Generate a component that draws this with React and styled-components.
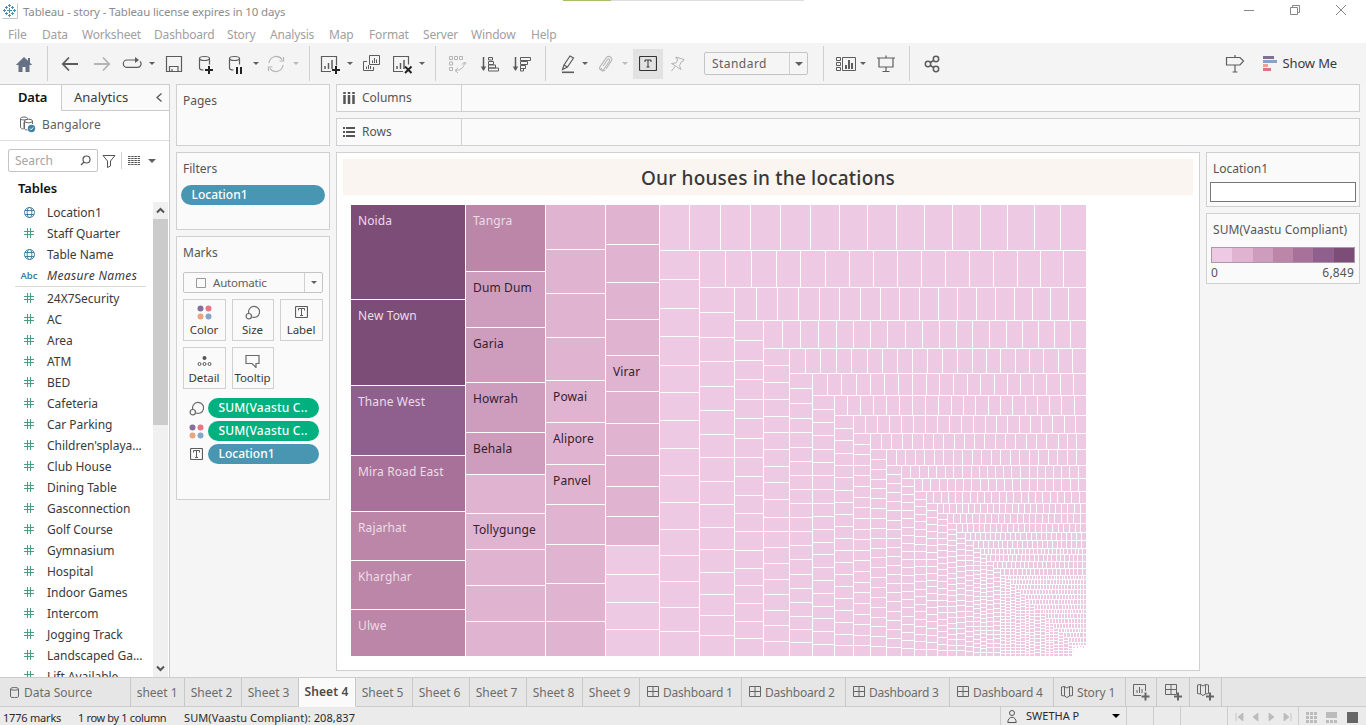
import React from 'react';
import styled, { createGlobalStyle, css } from 'styled-components';

const GlobalStyle = createGlobalStyle`
  * { box-sizing: border-box; }
  html, body { margin: 0; padding: 0; overflow: hidden; }
  body { font-family: "Noto Sans", "Open Sans", sans-serif; font-size: 12px; color: #333; }
`;

const font = css`
  font-size: ${(p) => p.$size || 12}px;
  letter-spacing: ${(p) => p.$ls || 0}px;
  white-space: nowrap;
`;

/* ---------- frame ---------- */
const Window = styled.div`
  width: 1366px; height: 725px; display: flex; flex-direction: column;
  background: #f5f5f5; overflow: hidden;
`;
const TitleBar = styled.header`
  height: 24px; background: #fff; display: flex; align-items: center; padding: 0 0 2px 2px;
  color: #8c8c8c; position: relative; flex: none;
`;
const TitleText = styled.span`font-size: 11.5px; letter-spacing: -0.14px; margin-left: 5px; white-space: nowrap;`;
const ProgressLine = styled.div`
  position: absolute; top: 0; left: 563px; width: 241px; height: 1px;
  background: linear-gradient(to right, #a3bf68 48px, #dedede 48px);
`;
const WindowButtons = styled.div`margin-left: auto; display: flex; gap: 30px; padding-right: 17px; height: 16px; margin-top: -2px;`;
const MenuBar = styled.nav`height: 19px; background: #fff; display: flex; color: #a0a0a0; flex: none;`;
const MenuItem = styled.span`
  width: ${(p) => p.$w}px; font-size: 12px; letter-spacing: -0.18px; line-height: 21px; white-space: nowrap;
  &:first-child { margin-left: 8px; }
`;
const Toolbar = styled.div`height: 41px; background: #f4f4f4; display: flex; align-items: center; flex: none;`;
const Slot = styled.span`
  margin-left: ${(p) => (p.$push ? 'auto' : `${p.$ml}px`)}; width: ${(p) => p.$w || 20}px; height: 20px; display: flex;
  align-items: center; justify-content: center; flex: none; color: ${(p) => (p.$off ? '#b4b4b4' : '#5c5c5c')};
`;
const Separator = styled.i`width: 1px; height: ${(p) => p.$h || 35}px; margin-left: ${(p) => p.$ml}px; background: #d0d0d0; flex: none;`;
const Caret = styled.i`
  margin-left: ${(p) => p.$ml || 0}px; width: 0; height: 0; flex: none;
  border-left: ${(p) => p.$s || 3}px solid transparent; border-right: ${(p) => p.$s || 3}px solid transparent;
  border-top: ${(p) => p.$s || 3}px solid ${(p) => (p.$off ? '#bbb' : p.$c || '#606060')};
`;
const ActiveTool = styled.span`
  margin-left: 5px; width: 30px; height: 30px; background: #e2e2e2; color: #333; flex: none;
  display: flex; align-items: center; justify-content: center;
`;
const Select = styled.div`
  display: flex; width: ${(p) => p.$w}px; height: ${(p) => p.$h}px; margin: ${(p) => p.$mt || 0}px 0 0 ${(p) => p.$ml || 0}px;
  border: 1px solid #c4c4c4; border-radius: 2px; background: ${(p) => p.$bg}; align-items: center; flex: none;
`;
const SelectValue = styled.span`flex: 1; padding-left: ${(p) => p.$pl}px; display: flex; align-items: center; gap: 7px; color: #606060; ${font}`;
const SelectArrow = styled.span`
  width: 18px; align-self: stretch; border-left: 1px solid #d0d0d0; display: flex; align-items: center; justify-content: center;
`;
const ShowMe = styled.span`margin: 0 29px 2px 5px; font-size: 13px; letter-spacing: -0.15px; color: #3a3a3a; white-space: nowrap; flex: none;`;

/* ---------- left pane ---------- */
const Body = styled.main`height: 593px; display: flex; flex: none;`;
const DataPane = styled.aside`
  width: 170px; border-right: 1px solid #ccc; border-top: 1px solid #ccc; background: #fff;
  display: flex; flex-direction: column; overflow: hidden; flex: none;
`;
const PaneTabs = styled.div`display: flex; height: 26px; flex: none;`;
const PaneTab = styled.div`
  width: ${(p) => (p.$active ? 61 : 108)}px; padding-left: ${(p) => (p.$active ? 18 : 12)}px; line-height: 25px;
  font-size: 13px; letter-spacing: ${(p) => (p.$active ? -0.2 : 0)}px; font-weight: ${(p) => (p.$active ? 600 : 400)};
  color: ${(p) => (p.$active ? '#111' : '#3a3a3a')};
  ${(p) => !p.$active && css`background: #fafafa; border-left: 1px solid #ccc; border-bottom: 1px solid #ccc;
    display: flex; align-items: center; justify-content: space-between; padding-right: 5px;`}
`;
const Source = styled.div`
  height: 30px; display: flex; align-items: center; gap: 6px; padding: 0 0 2px 19px; border-bottom: 1px solid #ddd;
  color: #606060; flex: none; ${font}
`;
const SearchRow = styled.div`height: 38px; padding: 8px 0 7px 8px; display: flex; align-items: center; flex: none;`;
const SearchBox = styled.div`
  width: 90px; height: 23px; border: 1px solid #c4c4c4; border-radius: 2px; display: flex; align-items: center;
  justify-content: space-between; padding: 0 6px 0 6px; color: #a4a4a4; ${font}
`;
const SearchTools = styled.div`display: flex; align-items: center; padding-left: 4px; height: 17px;`;
const ViewMode = styled.span`display: flex; margin-left: 6px;`;
const TablesTitle = styled.div`height: 22px; padding-left: 18px; font-size: 13px; font-weight: 600; letter-spacing: -0.15px; color: #111; line-height: 18px; flex: none;`;
const ListArea = styled.div`display: flex; flex: 1; min-height: 0;`;
const Fields = styled.div`width: 153px; overflow: hidden;`;
const Field = styled.div`
  height: 21px; display: flex; align-items: center; color: #3a3a3a; font-style: ${(p) => (p.$italic ? 'italic' : 'normal')};
  letter-spacing: ${(p) => (p.$italic ? 0.35 : -0.02)}px; white-space: nowrap; padding-top: 1px;
`;
const FieldIcon = styled.span`
  width: 28px; margin: 0 4px 0 15px; display: flex; justify-content: center; font-style: normal; font-size: 9.5px;
  font-weight: 600; letter-spacing: 0; color: #3f7fa0;
`;
const Divider = styled.hr`border: 0; height: 1px; margin: 1px 7px 0 15px; background: #dcdcd4;`;
const ScrollTrack = styled.div`width: 15px; background: #f0f0f0; display: flex; flex-direction: column; align-items: center; justify-content: space-between; margin-top: 1px;`;
const ScrollThumb = styled.div`width: 15px; height: 206px; background: #cbcbcb; margin-bottom: auto;`;
const ScrollArrow = styled.div`height: 17px; display: flex; align-items: center; justify-content: center;`;

/* ---------- shelves ---------- */
const Shelves = styled.section`width: 154px; margin-left: 6px; display: flex; flex-direction: column; gap: 6px; flex: none;`;
const Card = styled.div`
  border: 1px solid #d0d0d0; background: #fafafa; height: ${(p) => p.$h}px; display: flex; flex-direction: column; flex: none;
`;
const CardTitle = styled.div`height: 30px; padding-left: 6px; line-height: 31px; color: #555; ${font}`;
const Pill = styled.div`
  height: 20px; border-radius: 10px; background: ${(p) => p.$bg}; color: #fff; line-height: 20px; font-weight: 500;
  width: ${(p) => p.$w}px; padding-left: ${(p) => p.$pl || 10.5}px; margin: ${(p) => p.$mt || 0}px 0 0 ${(p) => p.$ml || 0}px; ${font}
`;
const MarkGrid = styled.div`display: grid; grid-template-columns: 43px 42px 43px; gap: 6px; padding: 6px 0 0 6px;`;
const MarkButton = styled.div`
  height: 42px; border: 1px solid #d0d0d0; display: flex; flex-direction: column; align-items: center;
  padding: 4px 1px 0 0; color: #3a3a3a; font-size: 11.5px; line-height: 20px; letter-spacing: -0.08px;
`;
const MarkGlyph = styled.span`height: 19px; display: flex; align-items: center; justify-content: center; color: #5c5c5c;`;
const MarkRows = styled.div`display: flex; flex-direction: column; gap: 3px; padding: 9px 0 0 12px;`;
const MarkRow = styled.div`display: flex; align-items: center; gap: 4px;`;

/* ---------- work area ---------- */
const Work = styled.section`width: 1024px; margin-left: 6px; display: flex; flex-direction: column; gap: 6px;`;
const ShelfRow = styled.div`height: 28px; border: 1px solid #d0d0d0; background: #fafafa; display: flex; flex: none;`;
const ShelfLabel = styled.div`
  width: 125px; border-right: 1px solid #d0d0d0; display: flex; align-items: center; gap: 7px; padding: 0 0 1px 6px; color: #555; ${font}
`;
const Split = styled.div`display: flex; gap: 6px;`;
const View = styled.div`width: 864px; height: 519px; border: 1px solid #d0d0d0; background: #fff; padding: 6px;`;
const ViewTitle = styled.h1`
  margin: 0; height: 36px; background: #faf5f1; text-align: center; font-size: 19px; font-weight: 500; letter-spacing: 0.2px;
  line-height: 39px; color: #383838;
`;
const Legends = styled.div`width: 154px; display: flex; flex-direction: column; gap: 6px;`;
const FilterInput = styled.div`height: 20px; margin: -1px 3px 0; border: 1px solid #777; background: #fff;`;
const Ramp = styled.div`height: 16px; margin: 3px 4px 0; border: 1px solid #a79aa4; display: flex;`;
const RampStep = styled.i`flex: 1; background: ${(p) => p.$bg};`;
const RampEnds = styled.div`display: flex; justify-content: space-between; padding: 0 5px 0 4px; color: #555; line-height: 19px; ${font}`;

/* ---------- bottom ---------- */
const TabBar = styled.footer`height: 30px; border-top: 1px solid #ccc; background: #e6e6e6; display: flex; flex: none;`;
const Tab = styled.div`
  width: ${(p) => p.$w}px; border-right: 1px solid #c8c8c8; display: flex; align-items: center; gap: ${(p) => p.$gap || 4}px;
  justify-content: ${(p) => (p.$left ? 'flex-start' : 'center')}; padding-left: ${(p) => p.$left || 0}px; color: #6c6c6c; flex: none;
  border-bottom: 1px solid #ccc;
  ${(p) => p.$active && css`background: #fafafa; font-weight: 600; color: #4a4a4a; border-bottom-color: #fafafa; padding-bottom: 2px;`}
  ${font}
`;
const TabFill = styled.div`flex: 1; border-bottom: 1px solid #ccc;`;
const StatusBar = styled.footer`height: 18px; background: #ebebeb; display: flex; font-size: 11px; color: #2a2a2a; line-height: 22px; letter-spacing: 0;`;
const StatusText = styled.span`width: ${(p) => p.$w}px; padding-left: ${(p) => p.$pl || 0}px; white-space: nowrap; letter-spacing: ${(p) => p.$ls || 0}px;`;
const StatusCell = styled.span`
  width: ${(p) => p.$w}px; border-left: 1px solid #ccc; display: flex; align-items: center; flex: none;
  ${(p) => p.$user && css`padding: 0 6px 0 6px; gap: 9px;`}
  ${(p) => p.$spread && css`justify-content: space-around; padding: 2px 3px 0;`}
`;
const UserName = styled.span`flex: 1; letter-spacing: 0;`;

/* ---------- icons ---------- */
const Svg = ({ w = 20, h = w, children, sw = 1, ...rest }) => (
  <svg width={w} height={h} viewBox={`0 0 ${w} ${h}`} fill="none" stroke="currentColor" strokeWidth={sw} {...rest}>{children}</svg>
);
const Logo = () => (
  <Svg w={16} color="#4d8fac">
    <path d="M.5 15.500h15V.5" stroke="#c4c4c4" />
    <path d="M7.500 5v5M5 7.500h5M7.500 1v3M6 2.500h3M7.500 11v3M6 12.500h3M1 7.500h3M2.500 6v3M11 7.500h3M12.500 6v3M4.500 3v3M3 4.500h3M10.500 3v3M9 4.500h3M4.500 9v3M3 10.500h3M10.500 9v3M9 10.500h3" />
  </Svg>
);
const Home = () => <Svg><path d="M10 3 1.800 11H4.500v7h4v-5h3v5h4v-7h2.700L16 8.800V4h-2v2.800z" fill="#667183" stroke="none" /></Svg>;
const Back = () => <Svg sw={1.800}><path d="M18 10H3M9 3.500 2.800 10 9 16.500" /></Svg>;
const Forward = () => <Svg sw={1.800}><path d="M2 10h15M11 3.500 17.200 10 11 16.500" /></Svg>;
const Replay = () => <Svg sw={1.200}><path d="M15 6H5a3.700 3.700 0 0 0 0 7.400h10.500a3.500 3.500 0 0 0 2.500-6" /><path d="M13 3v6l4-3z" fill="currentColor" stroke="none" /></Svg>;
const Save = () => <Svg sw={1.200}><path d="M2.500 2.500h15v15h-15zM5.500 17.500v-5h8.500v5M8 17.500V15" /></Svg>;
const Cylinder = ({ children }) => (
  <Svg sw={1.200}><ellipse cx="8.500" cy="4.500" rx="5" ry="2" /><path d="M3.500 4.500v9.500c0 1.200 1.600 2 4 2M13.500 4.500v6" />{children}</Svg>
);
const Plus = ({ x, y }) => <path d={`M${x - 4} ${y}h8M${x} ${y - 4}v8`} stroke="#222" strokeWidth="2" />;
const Refresh = () => (
  <Svg sw={1.200}><path d="M3 9a7.200 7.200 0 0 1 13-3.500M17 11a7.200 7.200 0 0 1-13 3.500M17.500 3v4h-4M2.500 17v-4h4" /></Svg>
);
const Bars = ({ x = 0 }) => <path d={`M${x + 5} 15v-3M${x + 8.500} 15V9M${x + 12} 15V6`} strokeWidth="1.500" />;
const NewSheet = () => <Svg><path d="M11 17.500H1.500v-15h15v9" strokeWidth="1.200" /><Bars /><Plus x={16} y={16} /></Svg>;
const ClearSheet = () => (
  <Svg><path d="M10 17.500H.5v-15h15v8" strokeWidth="1.200" /><Bars x={-1} /><path d="m12 12.500 6.500 6.500M18.500 12.500 12 19" stroke="#222" strokeWidth="2" /></Svg>
);
const Duplicate = () => (
  <Svg><path d="M8.500 1.500h10v9h-10zM6 7.500H2.500v9h10V13M11.500 9V6.500M13.500 9V4M15.500 9V5.500M5.500 15v-2.500M7.500 15v-4M9.500 15v-3" /></Svg>
);
const Swap = () => (
  <Svg><path d="M2.500 2.500h3v3h-3zM7.500 2.500h3v3h-3zM12.500 2.500h3v3h-3zM2.500 8h3v3h-3zM2.500 13.500h3v3h-3zM17.500 8c0 5-3 8-9 8.500M15 10.500 17.500 8 20 10.500M11 14l-3 2.500 3 2.500" /></Svg>
);
const Sort = ({ desc }) => (
  <Svg><path d="M3.500 3v13" strokeWidth="1.500" /><path d="M.8 12.500h5.400L3.500 17z" fill="currentColor" stroke="none" />
    <path d={desc ? 'M8.500 3.500h10v3h-10zM8.500 7.500h7v3h-7zM8.500 11.500h5v3h-5zM8.500 14.500h3v2.500h-3z' : 'M8.500 3.500h4v2.500h-4zM8.500 7.500h5v3h-5zM8.500 11h7v3h-7zM8.500 14h10v3h-10z'} /></Svg>
);
const Pen = () => <Svg><path d="m6 11 6-9 3.500 2-6 9zM6 11l-1.500 4.500 5-2.500" strokeWidth="1.200" /><path d="M4 18.300h12" strokeWidth="1.600" /></Svg>;
const Clip = () => <Svg sw={1.100}><path d="m8 12 4.500-6.500c1.200-1.500 3 0 2 1.500L9 15c-2 2.500-5.500.5-4-2.300l6-8.700c2.500-3.300 7.500-.5 5.300 3L11 15M6.500 14c-1 2.500 1.500 4 3.500 2" /></Svg>;
const TextBox = ({ w = 18, h = 15 }) => (
  <Svg w={w} h={h}><rect x=".5" y=".5" width={w - 1} height={h - 1} rx="1" strokeWidth="1.200" />
    <path d={`M${w / 2 - 3} ${h / 2 - 1.500}v-2h6v2M${w / 2} ${h / 2 - 3.500}v7M${w / 2 - 1.500} ${h / 2 + 3.500}h3`} /></Svg>
);
const Pin = () => <Svg><path d="m9 3 8 2.500-.5 1.500-2 .5-2 4 1.500 4-4.500-3-5-3 4.500-.5 2-4L9 4.500zM8.500 12 4.500 17" /></Svg>;
const Cards = () => <Svg w={22} h={20}><path d="M1.500 3.500h4v3h-4zM1.500 8.500h4v3h-4zM1.500 13.500h4v3h-4zM7.500 3.500h13v13h-13z" /><path d="M11 15v-4M14 15V6M17 15V9" strokeWidth="2" /></Svg>;
const Present = () => <Svg sw={1.200}><path d="M1 4h18M3 4v9h14V4M10 1.500V4M10 13v4.500M6.500 17.500h7" /></Svg>;
const Share = () => <Svg sw={1.500}><circle cx="6" cy="10" r="2.700" /><circle cx="14" cy="5" r="2.700" /><circle cx="14" cy="15" r="2.700" /><path d="m8.300 8.500 3.400-2M8.300 11.500l3.400 2" /></Svg>;
const Signpost = () => <Svg sw={1.200}><path d="M1.500 3.500h13.500l3.500 3.500-3.500 4h-13.500zM10 1v2.500M10 11v7M7.500 18h5" /></Svg>;
const ShowMeIcon = () => (
  <Svg w={15} stroke="none"><path d="M0 0h11v3H0z" fill="#80708f" /><path d="M0 4h14v3H0z" fill="#85a3c4" /><path d="M0 8h5v3H0z" fill="#e3a78c" /><path d="M0 12h8v3H0z" fill="#dc7486" /></Svg>
);
const Globe = () => <Svg w={11} color="#4182a4"><circle cx="5.500" cy="5.500" r="5" /><ellipse cx="5.500" cy="5.500" rx="2.300" ry="5" /><path d="M1 3.500h9M1 7.500h9" /></Svg>;
const Hash = () => <Svg w={10} color="#4e9a83" sw={1.100}><path d="M3.500 0v10M6.500 0v10M0 3.500h10M0 6.500h10" /></Svg>;
const Dots = () => (
  <Svg w={15} stroke="none"><circle cx="3.500" cy="3.500" r="3" fill="#84709a" /><circle cx="11.500" cy="3.500" r="3" fill="#ed7484" /><circle cx="3.500" cy="11.500" r="3" fill="#eaa580" /><circle cx="11.500" cy="11.500" r="3" fill="#85a5c9" /></Svg>
);
const SizeIcon = () => <Svg w={15} sw={1.200} color="#6a6a6a"><path d="M3.800 8.500A5.500 5.500 0 1 1 7 12" /><circle cx="3.800" cy="11.200" r="2.700" /></Svg>;
const DetailIcon = () => <Svg w={15} h={15} color="#555"><circle cx="7.500" cy="5" r="2" fill="currentColor" stroke="none" /><circle cx="2.500" cy="11" r="1.500" /><circle cx="7.500" cy="11" r="1.500" /><circle cx="12.500" cy="11" r="1.500" /></Svg>;
const TipIcon = () => <Svg w={15} sw={1.200} color="#6a6a6a"><path d="M1 2.500h13v8h-3v4l-4-4H1z" /></Svg>;
const GridIcon = ({ plus }) => <Svg w={plus ? 17 : 12} h={plus ? 17 : 12} color="#666"><path d="M.5.5h11v10H.5zM6 .5v10M.5 5.500h11" />{plus && <path d="M9 12.500h8M13 8.500v8" strokeWidth="2" />}</Svg>;
const Book = ({ plus }) => (
  <Svg w={plus ? 17 : 12} h={plus ? 17 : 12} color="#666">
    <path d="M.5 1 3.500 .5 6 2 8.500.5l3 .5V9.500l-3 .5L6 11.500 3.500 10l-3-.5zM3.500.5V10M8.500.5V10" />
    {plus && <path d="M9 12.500h8M13 8.500v8" strokeWidth="2" />}
  </Svg>
);
const SheetPlus = () => <Svg w={17} color="#666"><path d="M8 11.500H.5V.5h12V7M4 9V6M6.500 9V3M9 9V5" /><path d="M8.500 12.500h8M12.500 8.500v8" strokeWidth="2" /></Svg>;
const Chevron = ({ d, sw = 1.500, w = 9 }) => <Svg w={w} sw={sw} color="#555"><path d={d} /></Svg>;

/* ---------- treemap ---------- */
const LEFT = 351, TOP = 205, RIGHT = 1086, BOTTOM = 656;
const TINT = ['#edc9e3', '#e0b3d1', '#ce9dbe', '#bc86a9', '#a87199', '#8f608e', '#7b4d77'];

const columns = [
  { x: 351, end: 465, cuts: [299, 385, 455, 511, 560, 609], tints: [6, 6, 5, 4, 3, 3, 3],
    names: ['Noida', 'New Town', 'Thane West', 'Mira Road East', 'Rajarhat', 'Kharghar', 'Ulwe'] },
  { x: 466, end: 545, cuts: [271, 327, 382, 432, 474, 513, 549, 585, 621], tints: [3, 2, 2, 2, 2, 1, 1, 1, 1, 1],
    names: ['Tangra', 'Dum Dum', 'Garia', 'Howrah', 'Behala', '', 'Tollygunge'] },
  { x: 546, end: 605, cuts: [249, 293, 337, 380, 422, 464, 504, 544, 583, 621], tints: Array(11).fill(1),
    names: ['', '', '', '', 'Powai', 'Alipore', 'Panvel'] },
  { x: 606, end: 659, cuts: [244, 282, 319, 355, 391, 423, 455, 486, 516, 545, 574, 602, 629],
    tints: [1, 1, 1, 1, 1, 1, 1, 1, 1, 0, 0, 0, 0, 0], names: ['', '', '', '', 'Virar'] },
];
columns[3].tints[9] = 1;
const stepX = [659, 699, 734, 763, 789, 812, 834, 853, 870, 886, 901, 914, 926, 937, 947, 956, 965, 973, 980, 986, 993,
  1000, 1005, 1010, 1015, 1020, 1025, 1029, 1034, 1040, 1045, 1049, 1053, 1058, 1063, 1068, 1072];
const stepY = [204, 250, 287, 320, 348, 373, 395, 415, 433, 449, 465, 478, 491, 503, 513, 523, 532, 540, 548, 554, 561,
  568, 575, 579, 584, 589, 594, 599, 604, 609, 613, 618, 623, 628, 632, 637, 642, 645];
const rowCuts = [
  [689, 720, 750, 780, 810, 839, 867, 896, 924, 952, 980, 1007, 1034, 1060],
  [725, 751, 776, 800, 825, 849, 873, 897, 921, 945, 969, 993, 1017, 1040, 1063],
  [756, 777, 798, 819, 839, 860, 880, 899, 919, 938, 957, 976, 995, 1014, 1032, 1050, 1068],
  [782, 800, 818, 836, 853, 870, 887, 905, 922, 939, 956, 972, 989, 1006, 1022, 1038, 1054, 1070],
  [805, 820, 836, 851, 867, 882, 897, 912, 927, 942, 957, 972, 986, 1000, 1015, 1029, 1043, 1058, 1072],
  [827, 841, 856, 870, 884, 898, 912, 926, 939, 953, 967, 980, 994, 1007, 1020, 1033, 1046, 1060, 1073],
  [847, 860, 873, 886, 899, 912, 925, 938, 951, 963, 975, 988, 1000, 1012, 1025, 1037, 1049, 1061, 1074],
  [865, 877, 889, 901, 913, 925, 937, 949, 961, 973, 985, 996, 1007, 1019, 1030, 1041, 1052, 1064, 1075],
  [881, 891, 902, 912, 923, 933, 943, 954, 964, 974, 984, 995, 1005, 1015, 1026, 1036, 1046, 1058, 1067, 1076],
  [896, 905, 915, 924, 934, 943, 953, 962, 972, 981, 991, 1000, 1010, 1019, 1029, 1038, 1048, 1057, 1067, 1076],
  [910, 919, 928, 936, 945, 953, 962, 971, 979, 987, 995, 1003, 1011, 1020, 1029, 1037, 1045, 1053, 1061, 1069, 1078],
];
const columnCuts = [
  [279, 308, 336, 365, 392, 420, 448, 475, 502, 529, 555, 581, 607, 631],
  [312, 337, 361, 386, 410, 434, 457, 481, 504, 527, 549, 572, 594, 615, 635],
  [340, 360, 379, 399, 418, 438, 457, 476, 495, 513, 531, 550, 568, 585, 603, 621, 638],
  [365, 382, 399, 416, 432, 449, 466, 482, 499, 517, 531, 547, 563, 579, 594, 610, 625, 641],
  [388, 403, 418, 432, 447, 461, 475, 489, 503, 517, 531, 545, 559, 574, 588, 602, 616, 629, 642],
  [409, 422, 435, 449, 462, 475, 489, 503, 516, 529, 542, 554, 567, 580, 593, 606, 618, 631, 644],
  [428, 440, 453, 465, 477, 490, 502, 514, 526, 538, 550, 562, 574, 586, 598, 610, 622, 634, 645],
];

const evenCuts = (from, to, thickness) => {
  const n = Math.max(1, Math.round((to - from) / Math.max(2.700, thickness * 0.620)));
  return Array.from({ length: n - 1 }, (_, i) => Math.round(from + ((i + 1) * (to - from)) / n));
};
const cell = (x0, y0, x1, y1) => `M${x0} ${y0}H${x1}V${y1}H${x0}Z`;

// Each step lays one horizontal strip across the top and one vertical strip down the left of what remains.
const smallCells = () => {
  const out = [];
  for (let i = 0; i < stepX.length; i++) {
    const x = stepX[i], y = stepY[i], yn = stepY[i + 1];
    const rc = [x, ...(rowCuts[i] || evenCuts(x, RIGHT, yn - y)), RIGHT];
    for (let k = 0; k < rc.length - 1; k++) out.push(cell(rc[k] + 1, y + 1, rc[k + 1], yn));
    const xn = stepX[i + 1];
    if (xn === undefined) break;
    const cc = [yn, ...(columnCuts[i] || evenCuts(yn, BOTTOM, xn - x)), BOTTOM];
    for (let k = 0; k < cc.length - 1; k++) out.push(cell(x + 1, cc[k] + 1, xn, cc[k + 1]));
  }
  for (let a = 0; a < 3; a++) out.push(cell(1073, 647 + a * 3, 1075 - a, 648 + a * 3), cell(1077 + a * 3, 646, 1078 + a * 3, 648 - (a % 2)));
  return out.join('');
};

const TreemapSvg = styled.svg`display: block; margin: 10px 0 0 8px; shape-rendering: crispEdges;`;
const MarkLabel = styled.text`font: 12px "Noto Sans", sans-serif; letter-spacing: 0.12px; fill: ${(p) => (p.$light ? '#ecdce8' : '#33222f')};`;

const Treemap = () => (
  <TreemapSvg width={RIGHT - LEFT} height={BOTTOM - TOP} viewBox={`${LEFT} ${TOP} ${RIGHT - LEFT} ${BOTTOM - TOP}`}>
    {columns.map((c) => {
      const ys = [TOP - 1, ...c.cuts, BOTTOM];
      return c.tints.map((t, i) => (
        <g key={`${c.x}-${i}`}>
          <rect x={c.x} y={ys[i] + 1} width={c.end - c.x} height={ys[i + 1] - ys[i] - 1} fill={TINT[t]} />
          {c.names[i] && <MarkLabel x={c.x + 7} y={ys[i] + 21} $light={t > 2}>{c.names[i]}</MarkLabel>}
        </g>
      ));
    })}
    <path d={smallCells()} fill={TINT[0]} />
  </TreemapSvg>
);

/* ---------- content ---------- */
const menus = [['File', 34], ['Data', 40], ['Worksheet', 72], ['Dashboard', 73], ['Story', 43], ['Analysis', 59], ['Map', 40], ['Format', 54], ['Server', 48], ['Window', 60], ['Help', 40]];
const topFields = [['Location1', 'geo'], ['Staff Quarter', 'num'], ['Table Name', 'geo'], ['Measure Names', 'abc']];
const measures = ['24X7Security', 'AC', 'Area', 'ATM', 'BED', 'Cafeteria', 'Car Parking', "Children'splaya...", 'Club House', 'Dining Table', 'Gasconnection', 'Golf Course', 'Gymnasium', 'Hospital', 'Indoor Games', 'Intercom', 'Jogging Track', 'Landscaped Ga...', 'Lift Available'];
const sheets = [['sheet 1', 54], ['Sheet 2', 57], ['Sheet 3', 57], ['Sheet 4', 57], ['Sheet 5', 57], ['Sheet 6', 57], ['Sheet 7', 57], ['Sheet 8', 56], ['Sheet 9', 57]];
const dashboards = [['Dashboard 1', 102], ['Dashboard 2', 104], ['Dashboard 3', 104], ['Dashboard 4', 104]];

const FieldRow = ({ name, kind }) => (
  <Field $italic={kind === 'abc'}>
    <FieldIcon>{kind === 'geo' ? <Globe /> : kind === 'num' ? <Hash /> : 'Abc'}</FieldIcon>{name}
  </Field>
);

export default function App() {
  return (
    <Window>
      <GlobalStyle />
      <TitleBar>
        <ProgressLine />
        <Logo /><TitleText>Tableau - story - Tableau license expires in 10 days</TitleText>
        <WindowButtons>
          <Svg w={16} color="#888"><path d="M3 8.500h10" /></Svg>
          <Svg w={16} color="#888"><path d="M3.500 5.500h7v7h-7zM5.500 5.500v-2h7v7h-2" /></Svg>
          <Svg w={16} color="#888"><path d="m3 3 10 10M13 3 3 13" /></Svg>
        </WindowButtons>
      </TitleBar>
      <MenuBar>{menus.map(([m, w]) => <MenuItem key={m} $w={w}>{m}</MenuItem>)}</MenuBar>
      <Toolbar>
        <Slot $ml={14}><Home /></Slot><Separator $ml={13} />
        <Slot $ml={12}><Back /></Slot><Slot $ml={12} $off><Forward /></Slot>
        <Slot $ml={10}><Replay /></Slot><Caret $ml={7} />
        <Slot $ml={9}><Save /></Slot>
        <Slot $ml={12}><Cylinder><Plus x={13} y={16} /></Cylinder></Slot>
        <Slot $ml={10}><Cylinder><path d="M11 13v7M15 13v7" stroke="#222" strokeWidth="2" /></Cylinder></Slot><Caret $ml={7} />
        <Slot $ml={7} $off><Refresh /></Slot><Caret $ml={7} $off />
        <Separator $ml={10} />
        <Slot $ml={10}><NewSheet /></Slot><Caret $ml={7} />
        <Slot $ml={8}><Duplicate /></Slot>
        <Slot $ml={12}><ClearSheet /></Slot><Caret $ml={6} />
        <Separator $ml={10} />
        <Slot $ml={11} $off><Swap /></Slot><Slot $ml={13}><Sort /></Slot><Slot $ml={12}><Sort desc /></Slot>
        <Separator $ml={13} />
        <Slot $ml={12}><Pen /></Slot><Caret $ml={4} />
        <Slot $ml={7} $off><Clip /></Slot><Caret $ml={7} $off />
        <ActiveTool><TextBox /></ActiveTool>
        <Slot $ml={4} $off><Pin /></Slot>
        <Select $w={104} $h={23} $ml={17} $bg="#f5f5f5"><SelectValue $pl={7} $ls={0.45}>Standard</SelectValue><SelectArrow><Caret $s={4} /></SelectArrow></Select>
        <Separator $ml={15} />
        <Slot $ml={11} $w={22}><Cards /></Slot><Caret $ml={3} />
        <Slot $ml={10}><Present /></Slot>
        <Separator $ml={13} />
        <Slot $ml={12}><Share /></Slot>
        <Slot $push><Signpost /></Slot>
        <Slot $ml={18} $w={15}><ShowMeIcon /></Slot><ShowMe>Show Me</ShowMe>
      </Toolbar>

      <Body>
        <DataPane>
          <PaneTabs>
            <PaneTab $active>Data</PaneTab>
            <PaneTab>Analytics<Chevron d="M6.500.5 2 4.500l4.500 4" sw={1.300} /></PaneTab>
          </PaneTabs>
          <Source $ls={0.1}>
            <Svg w={17} color="#666"><ellipse cx="5" cy="2.500" rx="3.500" ry="1.500" /><path d="M1.500 2.500V11c0 1 1.500 2 3 2M5 6v7" /><ellipse cx="9.500" cy="5" rx="4" ry="1.800" /><path d="M5.500 5v7.500c0 1 1 1.500 3 1.500M13.500 5v3" /><circle cx="12.500" cy="12.500" r="3.700" fill="#3f83a5" stroke="none" /><path d="m10.800 12.500 1.300 1.300 2.200-2.400" stroke="#fff" /></Svg>
            Bangalore
          </Source>
          <SearchRow>
            <SearchBox>Search<Svg w={11} sw={1.200} color="#555"><circle cx="6.500" cy="4.500" r="3.500" /><path d="M4 7 1 10" /></Svg></SearchBox>
            <SearchTools>
              <Svg w={14} color="#555"><path d="M1 1.500h12L8.500 7v5l-3 1.500V7z" /></Svg>
              <Separator $ml={5} $h={17} />
              <ViewMode><Svg w={13} h={10} color="#555"><path d="M0 .5h12M0 2.500h12M0 4.500h12M0 6.500h12M0 8.500h12" strokeDasharray="2.500 .7" /></Svg></ViewMode>
              <Caret $ml={7} $s={4} />
            </SearchTools>
          </SearchRow>
          <TablesTitle>Tables</TablesTitle>
          <ListArea>
            <Fields>
              {topFields.map(([n, k]) => <FieldRow key={n} name={n} kind={k} />)}
              <Divider />
              {measures.map((n) => <FieldRow key={n} name={n} kind="num" />)}
            </Fields>
            <ScrollTrack>
              <ScrollArrow><Chevron d="M1 6.500 4.500 3 8 6.500" sw={2} /></ScrollArrow>
              <ScrollThumb />
              <ScrollArrow><Chevron d="M1 2.500 4.500 6 8 2.500" sw={2} /></ScrollArrow>
            </ScrollTrack>
          </ListArea>
        </DataPane>

        <Shelves>
          <Card $h={62}><CardTitle>Pages</CardTitle></Card>
          <Card $h={78}>
            <CardTitle>Filters</CardTitle>
            <Pill $bg="#4996b2" $w={144} $ml={4} $mt={2}>Location1</Pill>
          </Card>
          <Card $h={264}>
            <CardTitle>Marks</CardTitle>
            <Select $w={140} $h={21} $ml={6} $mt={5} $bg="#fafafa">
              <SelectValue $pl={12} $size={11.5} $ls={-0.2}><Svg w={10} color="#999"><path d="M.5.5h9v9h-9z" /></Svg>Automatic</SelectValue>
              <SelectArrow><Caret $s={3.500} /></SelectArrow>
            </Select>
            <MarkGrid>
              <MarkButton><MarkGlyph><Dots /></MarkGlyph>Color</MarkButton>
              <MarkButton><MarkGlyph><SizeIcon /></MarkGlyph>Size</MarkButton>
              <MarkButton><MarkGlyph><TextBox w={13} h={12} /></MarkGlyph>Label</MarkButton>
              <MarkButton><MarkGlyph><DetailIcon /></MarkGlyph>Detail</MarkButton>
              <MarkButton><MarkGlyph><TipIcon /></MarkGlyph>Tooltip</MarkButton>
            </MarkGrid>
            <MarkRows>
              <MarkRow><SizeIcon /><Pill $w={111} $bg="#00b180" $ls={0.2}>SUM(Vaastu C..</Pill></MarkRow>
              <MarkRow><Dots /><Pill $w={111} $bg="#00b180" $ls={0.2}>SUM(Vaastu C..</Pill></MarkRow>
              <MarkRow><Slot $w={15} $ml={0}><TextBox w={13} h={12} /></Slot><Pill $w={111} $bg="#4996b2">Location1</Pill></MarkRow>
            </MarkRows>
          </Card>
        </Shelves>

        <Work>
          <ShelfRow><ShelfLabel>
            <Svg w={12} h={12} sw={2.500}><path d="M1.500 0v2M6 0v2M10.500 0v2M1.500 3v9M6 3v9M10.500 3v9" /></Svg>Columns
          </ShelfLabel></ShelfRow>
          <ShelfRow><ShelfLabel>
            <Svg w={12} h={12} sw={2}><path d="M0 2h2M3 2h9M0 6h2M3 6h9M0 10h2M3 10h9" /></Svg>Rows
          </ShelfLabel></ShelfRow>
          <Split>
            <View>
              <ViewTitle>Our houses in the locations</ViewTitle>
              <Treemap />
            </View>
            <Legends>
              <Card $h={55}><CardTitle>Location1</CardTitle><FilterInput /></Card>
              <Card $h={71}>
                <CardTitle $ls={0.07}>SUM(Vaastu Compliant)</CardTitle>
                <Ramp>{TINT.map((c) => <RampStep key={c} $bg={c} />)}</Ramp>
                <RampEnds $ls={0.2}><span>0</span><span>6,849</span></RampEnds>
              </Card>
            </Legends>
          </Split>
        </Work>
      </Body>

      <TabBar>
        <Tab $w={131} $left={10} $gap={5}><Svg w={9} h={11} color="#666"><path d="M.5 2v7.500c0 1.500 8 1.500 8 0V2c0-2-8-2-8 0 0 1.500 8 1.500 8 0" /></Svg>Data Source</Tab>
        {sheets.map(([s, w]) => <Tab key={s} $w={w} $left={s === 'Sheet 4' ? 5.500 : 5.800} $ls={s === 'Sheet 4' ? 0.1 : -0.05} $active={s === 'Sheet 4'}>{s}</Tab>)}
        {dashboards.map(([s, w]) => <Tab key={s} $w={w} $left={7} $ls={-0.22}><GridIcon />{s}</Tab>)}
        <Tab $w={72} $left={7} $ls={-0.15}><Book />Story 1</Tab>
        <Tab $w={31}><SheetPlus /></Tab><Tab $w={33}><GridIcon plus /></Tab><Tab $w={32}><Book plus /></Tab>
        <TabFill />
      </TabBar>
      <StatusBar>
        <StatusText $w={78} $pl={3} $ls={-0.2}>1776 marks</StatusText>
        <StatusText $w={106} $ls={-0.35}>1 row by 1 column</StatusText>
        <StatusText $w={816} $ls={0.1}>SUM(Vaastu Compliant): 208,837</StatusText>
        <StatusCell $w={126} $user>
          <Svg w={10} h={13} color="#555"><circle cx="5" cy="3" r="2.500" /><path d="M.8 12.500c0-7 8.400-7 8.400 0z" /></Svg>
          <UserName>SWETHA P</UserName><Caret $s={4} $c="#000" />
        </StatusCell>
        <StatusCell $w={27} /><StatusCell $w={27} /><StatusCell $w={47} />
        <StatusCell $w={71} $spread>
          {['M1 0v8M8 0 3 4l5 4z', 'M7 0 2 4l5 4z', 'M2 0l5 4-5 4z', 'M8 0v8M1 0l5 4-5 4z'].map((d) => (
            <Svg key={d} w={9} h={8} color="#bbb" strokeWidth=".8"><path d={d} fill="currentColor" /></Svg>
          ))}
        </StatusCell>
        <StatusCell $w={68} $spread>
          <Svg w={12} h={11} stroke="none"><path d="M0 0h3v3H0zM4 0h3v3H4zM8 0h3v3H8zM0 4h3v3H0zM4 4h3v3H4zM8 4h3v3H8zM0 8h3v3H0zM4 8h3v3H4zM8 8h3v3H8z" fill="#bbb" /></Svg>
          <Svg w={12} h={11} stroke="none"><path d="M0 0h11v6H0zM0 8h3v3H0zM4 8h3v3H4zM8 8h3v3H8z" fill="#bbb" /></Svg>
          <Svg w={12} h={11} stroke="none"><path d="M0 0h11v11H0z" fill="#666" /></Svg>
        </StatusCell>
      </StatusBar>
    </Window>
  );
}
